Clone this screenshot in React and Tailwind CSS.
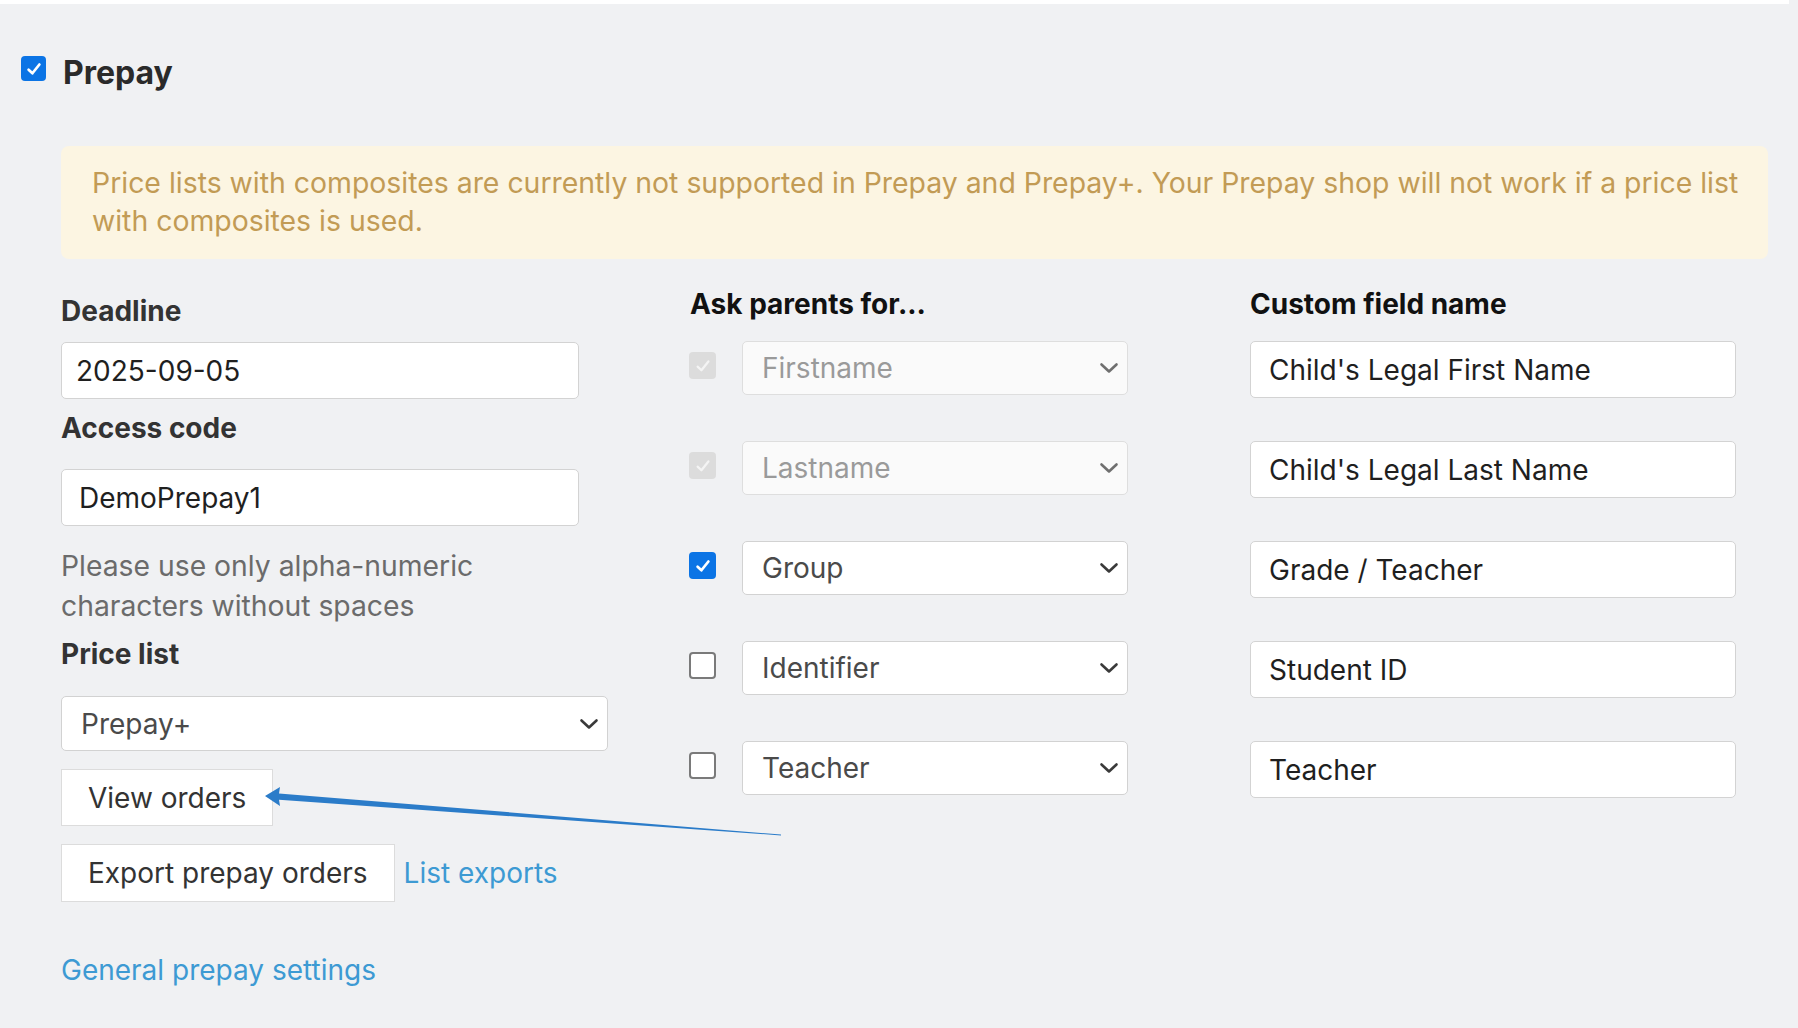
import React from "react";

const font = { fontFamily: "Inter, 'Liberation Sans', sans-serif" };

function Check({ state, size = "w-[25px] h-[25px]" }) {
  if (state === "checked") {
    return (
      <div className={`${size} rounded-[4px] bg-[#0b74e5] flex items-center justify-center shrink-0`}>
        <svg width="18" height="18" viewBox="0 0 16 16" fill="none">
          <path d="M3.2 8.6 L6.6 11.8 L12.8 4" stroke="white" strokeWidth="2.4" strokeLinecap="round" strokeLinejoin="round" />
        </svg>
      </div>
    );
  }
  if (state === "disabled") {
    return (
      <div className={`${size} rounded-[4px] bg-[#dcdcdc] flex items-center justify-center shrink-0`}>
        <svg width="18" height="18" viewBox="0 0 16 16" fill="none">
          <path d="M3.2 8.6 L6.6 11.8 L12.8 4" stroke="#f4f4f4" strokeWidth="2" strokeLinecap="round" strokeLinejoin="round" />
        </svg>
      </div>
    );
  }
  return <div className={`${size} rounded-[4px] bg-white border-[2px] border-[#7a7a7a] shrink-0`} />;
}

function Chevron({ color }) {
  return (
    <svg width="20" height="12" viewBox="0 0 20 12" fill="none">
      <path d="M2.5 2.5 L10 9.5 L17.5 2.5" stroke={color} strokeWidth="2.6" strokeLinecap="round" strokeLinejoin="round" />
    </svg>
  );
}

function Select({ label, disabled, w = "w-[386px]", h = "h-[54px]", pl = "pl-[19px]" }) {
  return (
    <div
      className={`${w} ${h} ${pl} pr-[8px] rounded-[5px] border flex items-center justify-between ${
        disabled ? "bg-[#fafafa] border-[#dedede] text-[#9a9a9a]" : "bg-white border-[#d2d2d2] text-[#4a4a4a]"
      }`}
    >
      <span className="text-[28px] leading-none">{label}</span>
      <Chevron color={disabled ? "#6f6f6f" : "#3a3a3a"} />
    </div>
  );
}

function TextInput({ value, w, pl = "pl-[16px]" }) {
  return (
    <div className={`${w} h-[57px] ${pl} rounded-[5px] border border-[#d3d3d3] bg-white flex items-center text-[28px] text-[#1f1f1f] leading-none`}>
      {value}
    </div>
  );
}

export default function App() {
  const rows = [
    { cb: "disabled", sel: "Firstname", dis: true, custom: "Child's Legal First Name" },
    { cb: "disabled", sel: "Lastname", dis: true, custom: "Child's Legal Last Name" },
    { cb: "checked", sel: "Group", dis: false, custom: "Grade / Teacher" },
    { cb: "empty", sel: "Identifier", dis: false, custom: "Student ID" },
    { cb: "empty", sel: "Teacher", dis: false, custom: "Teacher" },
  ];

  return (
    <div className="relative w-[1798px] h-[1028px] bg-[#f0f1f3] overflow-hidden" style={font}>
      <div className="h-[4px] w-[1789px] bg-white" />

      <div className="pl-[21px] pt-[51px] flex items-start gap-[17px]">
        <div className="mt-[1px]">
          <Check state="checked" />
        </div>
        <span className="text-[32px] leading-[36px] font-bold text-[#2a2a2a]">Prepay</span>
      </div>

      <div className="pl-[61px]">
        <div className="mt-[55px] w-[1707px] h-[113px] rounded-[8px] bg-[#fcf5e2] px-[31px] pt-[18px] text-[28.4px] leading-[38px] text-[#c29b55] whitespace-nowrap">
          Price lists with composites are currently not supported in Prepay and Prepay+. Your Prepay shop will not work if a price list
          <br />
          with composites is used.
        </div>

        <div className="mt-[28px] flex items-start">
          {/* Column 1 */}
          <div className="w-[547px] pt-[7px] flex flex-col items-start">
            <div className="text-[28px] leading-[34px] font-bold text-[#333]">Deadline</div>
            <div className="mt-[14px]">
              <TextInput value="2025-09-05" w="w-[518px]" pl="pl-[14px]" />
            </div>
            <div className="mt-[12px] text-[28px] leading-[34px] font-bold text-[#333]">Access code</div>
            <div className="mt-[24px]">
              <TextInput value="DemoPrepay1" w="w-[518px]" pl="pl-[17px]" />
            </div>
            <div className="mt-[20px] text-[28.3px] leading-[40px] text-[#6b6b6b] whitespace-nowrap">
              Please use only alpha-numeric
              <br />
              characters without spaces
            </div>
            <div className="mt-[11px] text-[28px] leading-[34px] font-bold text-[#333]">Price list</div>
            <div className="mt-[25px]">
              <Select label="Prepay+" w="w-[547px]" h="h-[55px]" pl="pl-[19px]" />
            </div>
            <button className="mt-[18px] h-[57px] px-[26px] bg-white border border-[#dcdcdc] text-[28px] leading-none text-[#333]">
              View orders
            </button>
            <div className="mt-[18px] flex items-center gap-[9px]">
              <button className="h-[58px] px-[26px] bg-white border border-[#dcdcdc] text-[28px] leading-none text-[#333] whitespace-nowrap">
                Export prepay orders
              </button>
              <span className="text-[28px] leading-none text-[#3d9ad3] whitespace-nowrap">List exports</span>
            </div>
            <div className="mt-[51px] text-[28px] leading-[34px] text-[#3d9ad3] whitespace-nowrap">General prepay settings</div>
          </div>

          {/* Columns 2 & 3 */}
          <div className="ml-[81px]">
            <div className="grid grid-cols-[439px_486px] gap-x-[122px]">
              <div className="text-[28px] leading-[34px] font-bold text-[#111] pl-[1px]">Ask parents for...</div>
              <div className="text-[28px] leading-[34px] font-bold text-[#111]">Custom field name</div>
            </div>
            <div className="mt-[20px] grid grid-cols-[439px_486px] gap-x-[122px] gap-y-[43px]">
              {rows.map((r) => (
                <React.Fragment key={r.sel}>
                  <div className="h-[57px] flex items-start gap-[26px]">
                    <div className="mt-[11px]">
                      <Check state={r.cb} size="w-[27px] h-[27px]" />
                    </div>
                    <Select label={r.sel} disabled={r.dis} />
                  </div>
                  <TextInput value={r.custom} w="w-[486px]" pl="pl-[18px]" />
                </React.Fragment>
              ))}
            </div>
          </div>
        </div>
      </div>

      {/* annotation arrow */}
      <svg className="absolute left-0 top-0 pointer-events-none" width="1798" height="1028" viewBox="0 0 1798 1028">
        <polygon
          points="265,796 280,787 279,793.4 781,834.6 781,835.4 279,799.8 280,806"
          fill="#2b7cc9"
        />
      </svg>
    </div>
  );
}
